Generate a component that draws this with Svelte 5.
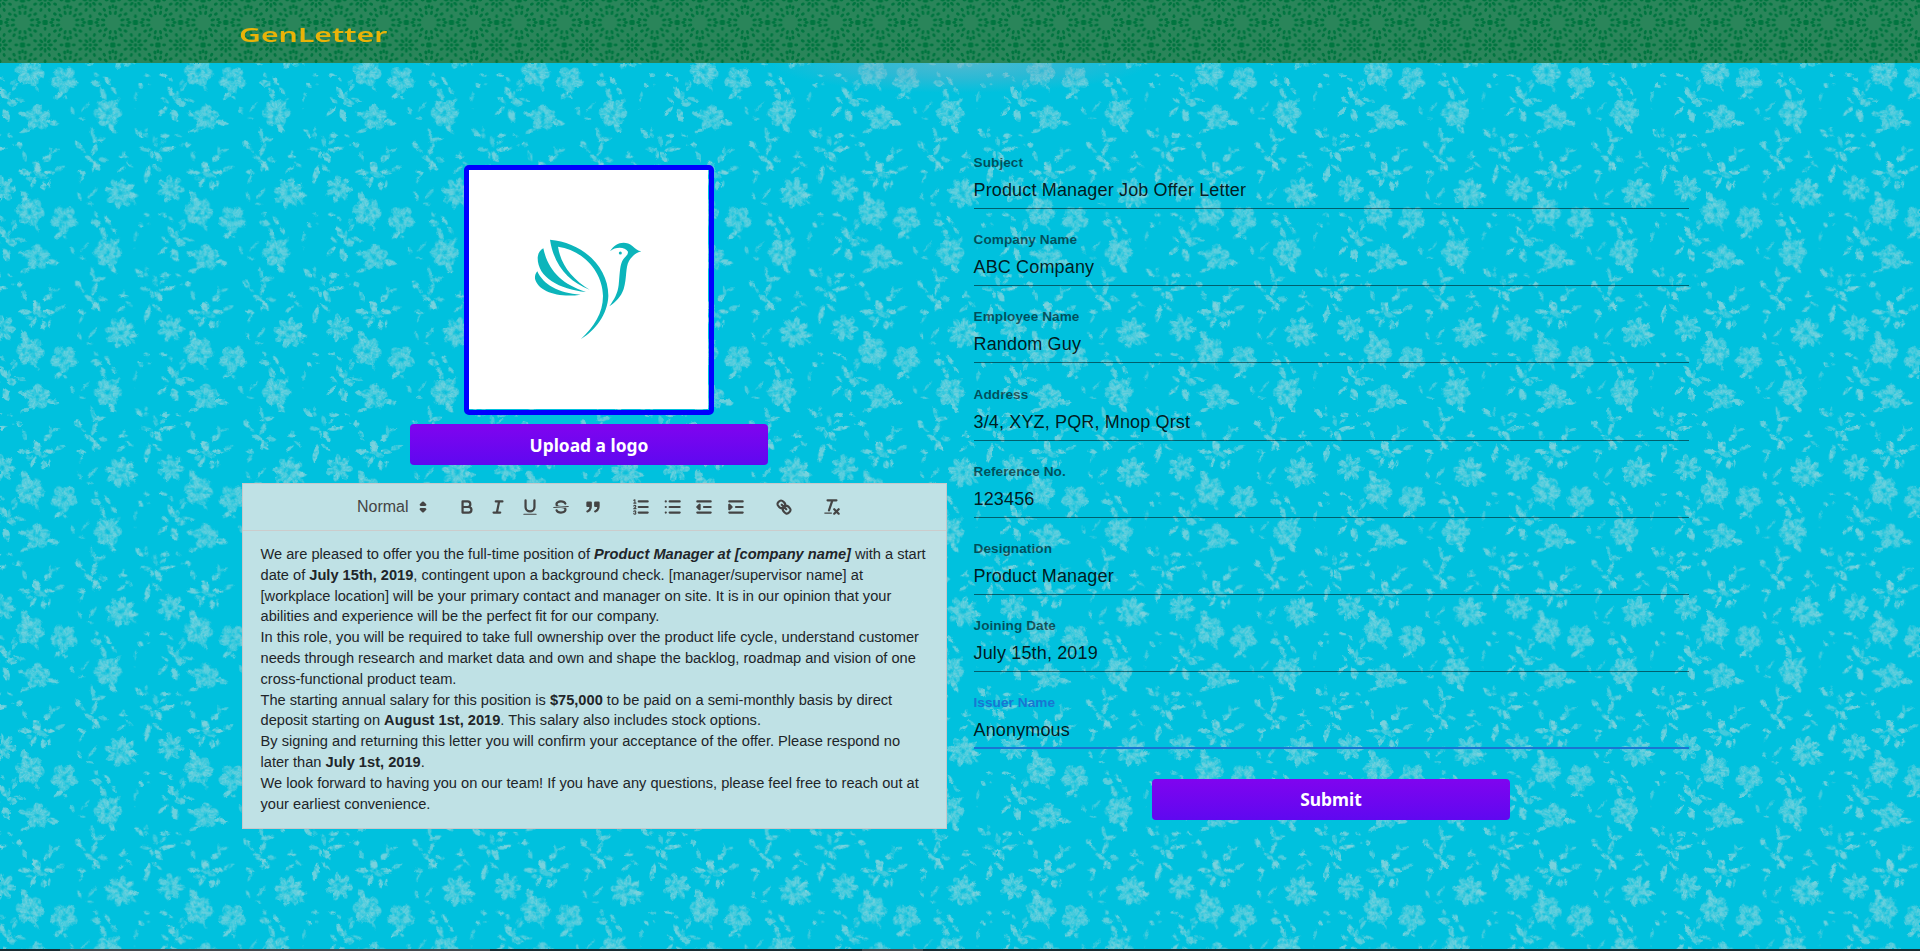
<script>
  const TW = 505.5;
  const TH = 418.8;

  // blooms: centre x, centre y, radius, petals, rotation
  const blooms = [
    [90, 27, 42, 6, 10], [192, 50, 40, 5, 20], [323, 150, 41, 6, 0],
    [112, 164, 38, 5, -18], [361, 390, 45, 8, 12], [512, 377, 40, 7, 5]
  ];
  // leaves: centre x, centre y, length, width, angle, opacity
  const leaves = [
    [72, 400, 34, 20, 60, .7], [40, 58, 24, 10, 130, .4], [110, 76, 24, 8, 60, .5],
    [177, 98, 34, 13, -40, .8], [195, 104, 16, 8, 30, .6],
    [288, 36, 18, 10, 50, .6], [289, 62, 36, 18, 10, .7], [322, 54, 34, 11, 55, .8], [341, 84, 28, 10, 50, .7], [309, 92, 42, 15, 65, .7],
    [352, 116, 28, 10, -50, .6], [336, 198, 36, 15, 50, .8],
    [217, 143, 28, 10, 70, .6], [256, 132, 42, 7, -50, .5], [246, 167, 24, 6, 5, .6],
    [440, 37, 20, 10, 10, .7], [490, 37, 26, 10, 5, .8], [512, 49, 20, 9, 40, .6], [422, 68, 20, 11, 45, .8], [446, 64, 10, 5, 0, .5], [406, 101, 34, 9, 100, .5], [404, 137, 5, 3, 0, .5],
    [489, 145, 42, 11, -45, .8], [523, 158, 42, 20, 68, .8], [541, 121, 34, 20, 10, .7], [565, 111, 40, 9, 14, .6], [549, 72, 32, 10, 120, .6], [514, 90, 44, 16, 60, .8], [495, 112, 30, 9, 40, .7], [530, 100, 36, 10, 100, .5],
    [158, 180, 42, 15, 8, .8], [67, 154, 28, 13, 12, .7], [76, 204, 34, 10, -20, .7],
    [30, 219, 20, 6, 20, .5], [514, 256, 30, 9, -10, .6], [58, 246, 20, 16, 0, .8], [40, 246, 8, 5, 0, .5], [73, 280, 34, 12, 70, .6],
    [278, 214, 46, 11, 75, .6], [297, 231, 44, 12, -15, .7], [234, 246, 28, 15, 50, .8], [249, 263, 22, 7, 40, .5], [284, 260, 44, 13, -70, .7], [268, 288, 36, 13, 30, .7], [289, 309, 36, 15, 55, .9], [309, 291, 30, 14, 10, .6], [245, 329, 28, 12, 10, .8], [244, 348, 32, 7, 115, .6], [280, 315, 24, 8, 95, .7],
    [151, 267, 36, 9, 80, .5], [168, 263, 28, 8, -20, .6], [142, 287, 28, 17, -45, .8],
    [75, 329, 44, 14, 4, .8], [109, 312, 36, 22, 60, .9], [148, 329, 36, 12, 5, .9], [180, 317, 36, 12, -25, .6], [101, 359, 38, 12, -65, .8], [130, 368, 28, 17, 85, .8], [147, 364, 26, 7, 95, .8], [120, 336, 50, 16, 20, .5], [88, 347, 24, 12, 0, .5],
    [370, 281, 30, 9, 0, .8], [370, 271, 14, 8, 90, .6], [364, 319, 34, 9, -35, .7], [388, 305, 30, 7, 35, .6],
    [417, 212, 36, 14, 45, .8], [438, 200, 16, 9, 90, .5], [438, 217, 16, 12, 20, .5], [495, 219, 30, 13, -5, .8], [465, 236, 36, 13, 75, .5], [437, 260, 36, 12, 5, .6], [500, 259, 50, 12, -12, .8], [474, 282, 38, 17, 55, .8], [443, 334, 58, 15, -78, .8], [471, 316, 38, 10, 38, .7], [489, 238, 26, 8, -40, .6], [455, 276, 24, 10, 80, .7], [535, 218, 18, 7, 20, .5],
    [238, 400, 28, 9, 65, .7], [278, 392, 44, 9, -52, .6], [270, 423, 24, 6, 5, .6],
    [400, 397, 34, 13, 5, .7], [398, 415, 28, 8, 40, .5], [388, 370, 34, 9, -35, .6]
  ];
  const wraps = [];
  for (const dx of [-TW, 0, TW]) for (const dy of [-TH, 0, TH]) wraps.push([dx, dy]);

  const petals = (n, rot) => Array.from({ length: n }, (_, i) => rot + (360 / n) * i);
  const ring = (n, start = 0) => Array.from({ length: n }, (_, i) => start + (360 / n) * i);

  const fields = [
    ['Subject', 'Product Manager Job Offer Letter'],
    ['Company Name', 'ABC Company'],
    ['Employee Name', 'Random Guy'],
    ['Address', '3/4, XYZ, PQR, Mnop Qrst'],
    ['Reference No.', '123456'],
    ['Designation', 'Product Manager'],
    ['Joining Date', 'July 15th, 2019'],
    ['Issuer Name', 'Anonymous']
  ];
</script>

<div class="page">
  <svg class="backdrop" width="1920" height="886" aria-hidden="true">
    <defs>
      <pattern id="floral" width="168.5" height="139.6" patternUnits="userSpaceOnUse">
        <g transform="scale(.33333)">
          {#each wraps as [dx, dy]}
            <g transform="translate({dx} {dy})">
              {#each blooms as [x, y, r, n, rot]}
                <g transform="translate({x} {y})">
                  {#each petals(n, rot) as a, i}
                    <g transform="rotate({a})">
                      <ellipse cx={r * 0.62} cy="0" rx={r * 0.43} ry={r * (n > 6 ? 0.24 : 0.4)} fill="#8cd4dc" opacity={i % 2 ? 0.46 : 0.58} />
                      <path d="M{r * 0.3} -2L{r * 0.95} -5M{r * 0.35} 4L{r * 0.9} 6" stroke="#a5dbe0" stroke-width="2.5" opacity=".4" />
                    </g>
                  {/each}
                  <circle r={r * 0.27} fill="#66cfdc" opacity=".5" />
                  <circle r={r * 0.13} fill="#12bdd8" opacity=".8" />
                </g>
              {/each}
              {#each leaves as [x, y, l, w, a, o]}
                <path transform="translate({x} {y}) rotate({a})" d="M{-l / 2} 0Q{-l / 5} {-w * 1.2} {l / 2} {-w * 0.1}Q{l / 6} {w * 1.05} {-l / 2} 0Z" fill="#86d3dc" opacity={o} />
              {/each}
            </g>
          {/each}
        </g>
      </pattern>
      <filter id="rough" x="0" y="0" width="100%" height="100%" color-interpolation-filters="sRGB">
        <feTurbulence type="fractalNoise" baseFrequency=".22" numOctaves="2" seed="4" result="n" />
        <feDisplacementMap in="SourceGraphic" in2="n" scale="3.5" xChannelSelector="R" yChannelSelector="G" result="d" />
        <feColorMatrix in="n" values="0 0 0 0 0  0 0 0 0 0  0 0 0 0 0  0 0 2.2 0 -.2" result="m" />
        <feComposite in="d" in2="m" operator="in" />
      </filter>
    </defs>
    <rect width="1920" height="886" fill="url(#floral)" filter="url(#rough)" />
  </svg>
  <div class="glow"></div>

  <header>
    <svg class="lattice" width="1920" height="63" aria-hidden="true">
      <defs>
        <pattern id="arabesque" width="45.15" height="45" patternUnits="userSpaceOnUse">
          <g fill="#00753f">
            {#each [[0, 22.5], [45.15, 22.5], [22.5, 0], [22.5, 45]] as [x, y]}
              <rect x={x - 2.6} y={y - 2.6} width="5.2" height="5.2" rx="1.4" />
              {#each ring(4) as a}
                <ellipse transform="translate({x} {y}) rotate({a})" cx="6.2" cy="0" rx="2" ry="1.4" />
              {/each}
            {/each}
            {#each ring(12, 15) as a}
              <ellipse transform="translate(22.5 22.5) rotate({a})" cx="10" cy="0" rx="2.3" ry="1.4" />
            {/each}
            {#each ring(16, 11.25) as a}
              <ellipse transform="translate(22.5 22.5) rotate({a})" cx="15.3" cy="0" rx="2" ry="1.5" />
            {/each}
            {#each [[0, 0], [45.15, 0], [0, 45], [45.15, 45]] as [x, y]}
              {#each ring(8) as a}
                <ellipse transform="translate({x} {y}) rotate({a})" cx="5.4" cy="0" rx="2.3" ry="1.4" />
              {/each}
              {#each ring(8, 22.5) as a}
                <ellipse transform="translate({x} {y}) rotate({a})" cx="10.8" cy="0" rx="2" ry="1.4" />
              {/each}
              <circle cx={x} cy={y} r="1.7" />
            {/each}
          </g>
        </pattern>
      </defs>
      <rect width="1920" height="63" fill="url(#arabesque)" />
    </svg>
    <span class="brand">GenLetter</span>
  </header>

  <main>
    <section class="left">
      <div class="upload">
        <div class="logo-frame">
          <svg width="239" height="239" viewBox="207 60 717 717" fill="#0cb5bb">
            <rect x="207" y="60" width="717" height="717" fill="#fff" />
            <path fill-rule="evenodd" d="M450 269C545 276 626 350 625 438C623 493 585 542 543 567C582 530 609 490 609 438C608 365 550 301 474 290C482 344 517 388 569 419C505 395 461 344 450 269Z" />
            <path d="M430 295C444 360 484 402 558 426C478 417 413 383 413 323C414 309 421 300 430 295Z" />
            <path d="M412 364C429 403 475 430 542 434C476 444 415 425 405 386C404 377 407 370 412 364Z" />
            <path fill-rule="evenodd" d="M630 304C645 277 676 270 697 288C707 297 713 302 724 304C709 308 697 317 687 333C676 351 681 385 671 417C663 440 647 457 628 469C643 447 653 431 656 405C660 367 659 344 670 328C677 318 684 315 684 305C675 290 646 290 630 304Z" />
            <circle cx="661" cy="309" r="4.5" />
          </svg>
        </div>
        <button class="action">Upload a logo</button>
      </div>

      <div class="editor">
        <div class="toolbar">
          <div class="picker">
            <span>Normal</span>
            <svg class="icon" viewBox="0 0 18 18"><path class="f" d="M7 11L9 13L11 11ZM7 7L9 5L11 7Z" /></svg>
          </div>
          <div class="group">
            <b class="tool"><svg class="icon" viewBox="0 0 18 18"><path d="M5 4H9.5A2.5 2.5 0 0 1 9.5 9H5ZM5 9H10.5A2.5 2.5 0 0 1 10.5 14H5Z" /></svg></b>
            <b class="tool"><svg class="icon" viewBox="0 0 18 18"><path d="M7 4H13M5 14H11M8 14L10 4" /></svg></b>
            <b class="tool"><svg class="icon" viewBox="0 0 18 18"><path d="M5 3V9a4 4 0 0 0 8 0V3" /><rect class="n" x="3" y="15" width="12" height="1" rx=".5" /></svg></b>
            <b class="tool"><svg class="icon" viewBox="0 0 18 18"><path class="t" d="M15.5 8.5L2.5 9.5" /><path class="n" d="M9.007,8C6.542,7.791,6,7.519,6,6.5,6,5.792,7.283,5,9,5c1.571,0,2.765.679,2.969,1.309a1,1,0,0,0,1.9-.617C13.356,4.106,11.354,3,9,3,6.2,3,4,4.538,4,6.5a3.2,3.2,0,0,0,.5,1.843Z" /><path class="n" d="M8.984,10C11.457,10.208,12,10.479,12,11.5c0,.708-1.283,1.5-3,1.5-1.571,0-2.765-.679-2.969-1.309a1,1,0,1,0-1.9.617C4.644,13.894,6.646,15,9,15c2.8,0,5-1.538,5-3.5a3.2,3.2,0,0,0-.5-1.843Z" /></svg></b>
            <b class="tool"><svg class="icon" viewBox="0 0 18 18"><path class="f" d="M4 5h3v3H4ZM11 5h3v3h-3ZM7 8c0 4.031-3 5-3 5M14 8c0 4.031-3 5-3 5" /></svg></b>
          </div>
          <div class="group">
            <b class="tool"><svg class="icon" viewBox="0 0 18 18"><path d="M7 4H15M7 9H15M7 14H15" /><path class="t" d="M2.5 5.5H4.5M2.5 3L3.5 2.5V5.5M4.5 10.5h-2c0-.234 1.85-1.076 1.85-2.234A.959.959 0 0 0 2.5 8.156M2.5 14.846a.959.959 0 0 0 1.85-.109A.7.7 0 0 0 3.75 14a.688.688 0 0 0 .6-.736.959.959 0 0 0-1.85-.109" /></svg></b>
            <b class="tool"><svg class="icon" viewBox="0 0 18 18"><path d="M6 4H15M6 9H15M6 14H15M2.5 4H2.5M2.5 9H2.5M2.5 14H2.5" /></svg></b>
            <b class="tool"><svg class="icon" viewBox="0 0 18 18"><path d="M3 14H15M3 4H15M9 9H15" /><path class="f" d="M5 7V11L3 9Z" /></svg></b>
            <b class="tool"><svg class="icon" viewBox="0 0 18 18"><path d="M3 14H15M3 4H15M9 9H15" /><path class="f" d="M3 7V11L5 9Z" /></svg></b>
          </div>
          <div class="group">
            <b class="tool"><svg class="icon" viewBox="0 0 18 18"><path d="M7 7L11 11M8.9,4.577a3.476,3.476,0,0,1,.36,4.679A3.476,3.476,0,0,1,4.577,8.9C3.185,7.5,2.035,6.4,4.217,4.217S7.5,3.185,8.9,4.577Z M13.423,9.1a3.476,3.476,0,0,0-4.679-.36,3.476,3.476,0,0,0,.36,4.679c1.392,1.392,2.5,2.542,4.679.36S14.815,10.5,13.423,9.1Z" /></svg></b>
          </div>
          <div class="group">
            <b class="tool"><svg class="icon" viewBox="0 0 18 18"><path d="M5 3H13M6.3 12L9.35 3M11 11L15 15M15 11L11 15" /><rect class="n" x="2" y="14" width="7" height="1" rx=".5" /></svg></b>
          </div>
        </div>
        <div class="letter">
          <p>We are pleased to offer you the full-time position of <b><i>Product Manager at [company name]</i></b> with a start<br />date of <b>July 15th, 2019</b>, contingent upon a background check. [manager/supervisor name] at<br />[workplace location] will be your primary contact and manager on site. It is in our opinion that your<br />abilities and experience will be the perfect fit for our company.</p>
          <p>In this role, you will be required to take full ownership over the product life cycle, understand customer<br />needs through research and market data and own and shape the backlog, roadmap and vision of one<br />cross-functional product team.</p>
          <p>The starting annual salary for this position is <b>$75,000</b> to be paid on a semi-monthly basis by direct<br />deposit starting on <b>August 1st, 2019</b>. This salary also includes stock options.</p>
          <p>By signing and returning this letter you will confirm your acceptance of the offer. Please respond no<br />later than <b>July 1st, 2019</b>.</p>
          <p>We look forward to having you on our team! If you have any questions, please feel free to reach out at<br />your earliest convenience.</p>
        </div>
      </div>
    </section>

    <section class="right">
      {#each fields as [label, value], i}
        <div class="field" class:focused={i === fields.length - 1}>
          <span class="label">{label}</span>
          <span class="value">{value}</span>
        </div>
      {/each}
      <button class="action">Submit</button>
    </section>
  </main>

  <div class="dock"><i class="seg wide"></i><i class="seg small"></i></div>
</div>

<style>
  :global(body) { margin: 0; }
  .page {
    position: relative;
    display: flex;
    flex-direction: column;
    width: 1920px;
    height: 951px;
    overflow: hidden;
    background: #00c1de;
    font-family: "Liberation Sans", Arial, sans-serif;
  }
  .backdrop { position: absolute; left: 0; top: 63px; }
  .glow {
    position: absolute;
    left: 770px;
    top: 63px;
    width: 380px;
    height: 30px;
    background: radial-gradient(ellipse 50% 100% at 50% 0, rgba(130, 180, 200, .6), rgba(110, 175, 200, .4) 50%, transparent);
  }
  header {
    position: relative;
    flex: none;
    height: 63px;
    background: #2a855a;
  }
  .lattice { position: absolute; left: 0; top: 0; }
  .brand {
    position: relative;
    display: inline-block;
    margin: 21px 0 0 239px;
    font: 600 19px/28px "Noto Sans", "Open Sans", sans-serif;
    color: #eab308;
    transform: scaleX(1.59);
    transform-origin: 0 0;
  }
  main {
    position: relative;
    flex: 1;
    display: flex;
    padding-left: 242px;
  }
  .left {
    width: 705px;
    padding-top: 102px;
  }
  .upload {
    display: flex;
    flex-direction: column;
    align-items: center;
    width: 694px;
  }
  .logo-frame {
    box-sizing: border-box;
    width: 250px;
    height: 250px;
    border: 5px solid #00f;
    border-radius: 5px;
  }
  .logo-frame svg { display: block; }
  .action {
    flex: none;
    width: 358px;
    height: 41px;
    margin: 9px 0 0;
    padding: 0;
    border: 0;
    border-radius: 4px;
    background: linear-gradient(#8004ef, #5f08f0);
    color: #fff;
    font: 700 17.4px/24px "Noto Sans", "Open Sans", sans-serif;
  }
  .editor {
    box-sizing: border-box;
    width: 705px;
    height: 346px;
    margin-top: 18px;
    border: 1px solid #c6c9cc;
    background: #bfe1e5;
  }
  .toolbar {
    display: flex;
    align-items: center;
    height: 46px;
    padding-left: 114px;
    border-bottom: 1px solid #ccc;
    color: #444;
  }
  .picker {
    display: flex;
    align-items: center;
    width: 94px;
    font-size: 16px;
  }
  .picker span { width: 56px; }
  .group { display: flex; margin-right: 16.6px; }
  .tool { display: flex; justify-content: center; width: 31.55px; }
  .icon {
    display: block;
    width: 20px;
    height: 20px;
    fill: none;
    stroke: #444;
    stroke-width: 2;
    stroke-linecap: round;
    stroke-linejoin: round;
  }
  .icon .f { fill: #444; }
  .icon .n { fill: #444; stroke: none; }
  .icon .t { stroke-width: 1; }
  .letter {
    padding: 13px 17.5px;
    font-size: 14.63px;
    line-height: 20.8px;
    color: #212529;
    white-space: nowrap;
  }
  p { margin: 0; }
  .right {
    width: 715px;
    margin-left: 26.5px;
    padding-top: 91px;
    display: flex;
    flex-direction: column;
    align-items: center;
  }
  .field {
    box-sizing: border-box;
    flex: none;
    display: flex;
    flex-direction: column;
    width: 715px;
    height: 55px;
    margin-bottom: 22.2px;
    border-bottom: 1px solid rgba(0, 0, 0, .5);
    color: rgba(0, 0, 0, .87);
  }
  .label {
    padding-top: 1px;
    font-size: 13.6px;
    font-weight: 700;
    line-height: 16px;
    letter-spacing: .07px;
    color: rgba(0, 0, 0, .6);
  }
  .value { padding-top: 8px; font-size: 18px; line-height: 23px; letter-spacing: .15px; }
  .focused { border-bottom: 2px solid #1976d2; }
  .focused .label { color: #1976d2; }
  .right .action { margin-top: 7.4px; }
  .dock {
    position: relative;
    flex: none;
    display: flex;
    height: 2px;
    padding-left: 60px;
    background: #182c33;
  }
  .seg { height: 2px; background: #454b50; }
  .wide { width: 430px; }
  .small { width: 61px; margin-left: 372px; }
</style>
